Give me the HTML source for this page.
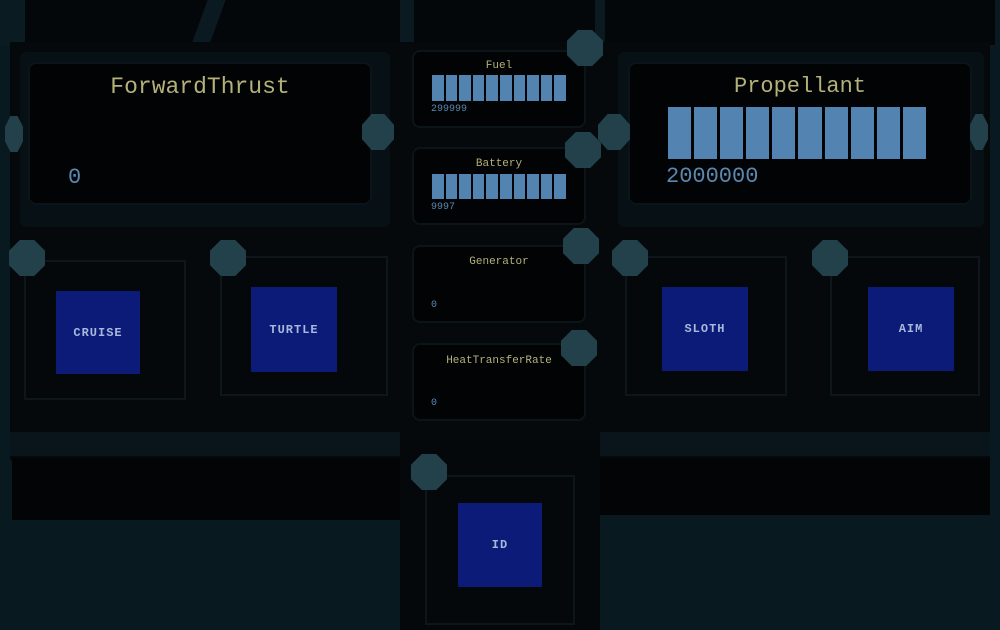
<!DOCTYPE html>
<html><head><meta charset="utf-8"><style>
*{margin:0;padding:0;box-sizing:border-box}
body{width:1000px;height:630px;background:#091920;position:relative;overflow:hidden;font-family:"Liberation Mono","DejaVu Sans Mono",monospace}
.a{position:absolute}
.frame{background:#05090c}
.scr{background:#020304;border:2px solid #0b1519;border-radius:8px}
.y{color:#b5b17a}
.b{color:#5a88b0}
.k{position:absolute;width:36px;height:36px;background:#22414a;clip-path:polygon(30% 0,70% 0,100% 30%,100% 70%,70% 100%,30% 100%,0 70%,0 30%)}
.bars{display:flex;gap:3px}
.bars i{flex:1;background:#5383b0;display:block}
.btnw{background:#04080a;border:2px solid #0c161b}
.btn{background:#0c1a78;color:#a8b9dc;font-weight:bold;display:flex;align-items:center;justify-content:center;font-size:12px;letter-spacing:1px}
</style></head><body>
<div class="a" style="left:20px;top:0;width:975px;height:45px;background:#040709"></div>
<div class="a" style="left:200px;top:0;width:18px;height:42px;background:#0b1a20;transform:skewX(-20deg)"></div>
<div class="a" style="left:400px;top:0;width:14px;height:42px;background:#0b1a20"></div>
<div class="a" style="left:595px;top:0;width:10px;height:42px;background:#0b1a20"></div>
<div class="a" style="left:0;top:0;width:25px;height:45px;background:#0b1b22"></div>
<div class="a frame" style="left:10px;top:42px;width:980px;height:418px"></div>
<div class="a" style="left:10px;top:432px;width:390px;height:24px;background:#09151a"></div>
<div class="a" style="left:600px;top:432px;width:390px;height:24px;background:#09151a"></div>
<div class="a" style="left:12px;top:458px;width:388px;height:62px;background:#020405"></div>
<div class="a" style="left:600px;top:458px;width:390px;height:57px;background:#020405"></div>
<div class="a" style="left:400px;top:440px;width:200px;height:190px;background:#04080a"></div>
<div class="a" style="left:20px;top:52px;width:370px;height:175px;background:#071014;border-radius:6px"></div>
<div class="a scr" style="left:28px;top:62px;width:344px;height:143px"></div>
<div class="a y" style="left:28px;top:74px;width:344px;text-align:center;font-size:23px">ForwardThrust</div>
<div class="a b" style="left:68px;top:165px;font-size:22px">0</div>
<div class="a" style="left:618px;top:52px;width:366px;height:175px;background:#071014;border-radius:6px"></div>
<div class="a scr" style="left:628px;top:62px;width:344px;height:143px"></div>
<div class="a y" style="left:628px;top:74px;width:344px;text-align:center;font-size:22px">Propellant</div>
<div class="a bars" style="left:668px;top:107px;width:258px;height:52px"><i></i><i></i><i></i><i></i><i></i><i></i><i></i><i></i><i></i><i></i></div>
<div class="a b" style="left:666px;top:164px;font-size:22px">2000000</div>
<div class="a scr" style="left:412px;top:50px;width:174px;height:78px"></div>
<div class="a y" style="left:412px;top:60px;width:174px;text-align:center;font-size:11px">Fuel</div>
<div class="a bars" style="left:432px;top:75px;width:134px;height:26px;gap:2px"><i></i><i></i><i></i><i></i><i></i><i></i><i></i><i></i><i></i><i></i></div>
<div class="a b" style="left:431px;top:104px;font-size:10px">299999</div>
<div class="a scr" style="left:412px;top:147px;width:174px;height:78px"></div>
<div class="a y" style="left:412px;top:158px;width:174px;text-align:center;font-size:11px">Battery</div>
<div class="a bars" style="left:432px;top:174px;width:134px;height:25px;gap:2px"><i></i><i></i><i></i><i></i><i></i><i></i><i></i><i></i><i></i><i></i></div>
<div class="a b" style="left:431px;top:202px;font-size:10px">9997</div>
<div class="a scr" style="left:412px;top:245px;width:174px;height:78px"></div>
<div class="a y" style="left:412px;top:256px;width:174px;text-align:center;font-size:11px">Generator</div>
<div class="a b" style="left:431px;top:300px;font-size:10px">0</div>
<div class="a scr" style="left:412px;top:343px;width:174px;height:78px"></div>
<div class="a y" style="left:412px;top:355px;width:174px;text-align:center;font-size:11px">HeatTransferRate</div>
<div class="a b" style="left:431px;top:398px;font-size:10px">0</div>
<div class="a btnw" style="left:24px;top:260px;width:162px;height:140px"></div>
<div class="a btn" style="left:56px;top:291px;width:84px;height:83px">CRUISE</div>
<div class="a btnw" style="left:220px;top:256px;width:168px;height:140px"></div>
<div class="a btn" style="left:251px;top:287px;width:86px;height:85px">TURTLE</div>
<div class="a btnw" style="left:625px;top:256px;width:162px;height:140px"></div>
<div class="a btn" style="left:662px;top:287px;width:86px;height:84px">SLOTH</div>
<div class="a btnw" style="left:830px;top:256px;width:150px;height:140px"></div>
<div class="a btn" style="left:868px;top:287px;width:86px;height:84px">AIM</div>
<div class="a btnw" style="left:425px;top:475px;width:150px;height:150px"></div>
<div class="a btn" style="left:458px;top:503px;width:84px;height:84px">ID</div>
<div class="k" style="left:9px;top:240px"></div>
<div class="k" style="left:210px;top:240px"></div>
<div class="k" style="left:567px;top:30px"></div>
<div class="k" style="left:565px;top:132px"></div>
<div class="k" style="left:563px;top:228px"></div>
<div class="k" style="left:561px;top:330px"></div>
<div class="k" style="left:612px;top:240px"></div>
<div class="k" style="left:812px;top:240px"></div>
<div class="k" style="left:411px;top:454px"></div>
<div class="k" style="left:362px;top:114px;width:32px;height:36px"></div>
<div class="k" style="left:598px;top:114px;width:32px;height:36px"></div>
<div class="k" style="left:5px;top:116px;width:18px;height:36px"></div>
<div class="k" style="left:970px;top:114px;width:18px;height:36px"></div>
</body></html>
